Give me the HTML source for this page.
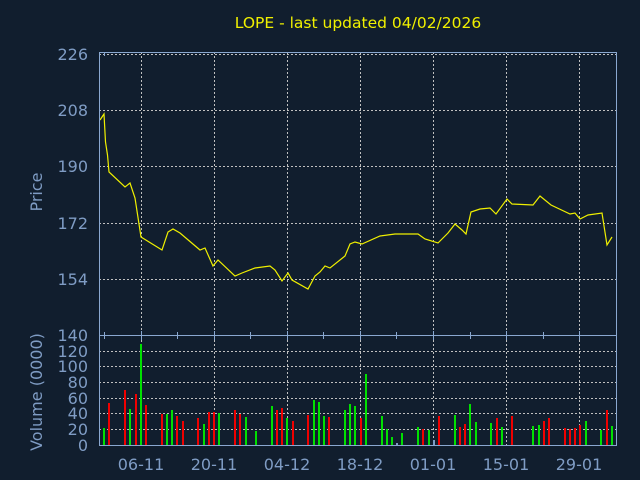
<!DOCTYPE html>
<html><head><style>
body{margin:0;background:#111e2e;}
svg{display:block;font-family:"DejaVu Sans","Liberation Sans",sans-serif;}
</style></head><body>
<svg width="640" height="480" xmlns="http://www.w3.org/2000/svg">
<rect width="640" height="480" fill="#111e2e"/>
<text x="358" y="28" fill="#f0f000" font-size="15.5" text-anchor="middle">LOPE - last updated 04/02/2026</text>
<g stroke="#c0c0c0" stroke-dasharray="2,2" stroke-width="1">
<line x1="99" y1="54.5" x2="617" y2="54.5"/>
<line x1="99" y1="110.5" x2="617" y2="110.5"/>
<line x1="99" y1="166.5" x2="617" y2="166.5"/>
<line x1="99" y1="223.5" x2="617" y2="223.5"/>
<line x1="99" y1="279.5" x2="617" y2="279.5"/>
<line x1="99" y1="351.5" x2="617" y2="351.5"/>
<line x1="99" y1="366.5" x2="617" y2="366.5"/>
<line x1="99" y1="382.5" x2="617" y2="382.5"/>
<line x1="99" y1="398.5" x2="617" y2="398.5"/>
<line x1="99" y1="413.5" x2="617" y2="413.5"/>
<line x1="99" y1="429.5" x2="617" y2="429.5"/>
<line x1="141.5" y1="52" x2="141.5" y2="445"/>
<line x1="214.5" y1="52" x2="214.5" y2="445"/>
<line x1="287.5" y1="52" x2="287.5" y2="445"/>
<line x1="360.5" y1="52" x2="360.5" y2="445"/>
<line x1="433.5" y1="52" x2="433.5" y2="445"/>
<line x1="506.5" y1="52" x2="506.5" y2="445"/>
<line x1="579.5" y1="52" x2="579.5" y2="445"/>
</g>
<g stroke-width="2">
<g stroke="#00e000">
<line x1="104" y1="445" x2="104" y2="428"/><line x1="130" y1="445" x2="130" y2="409"/><line x1="141" y1="445" x2="141" y2="344"/>
<line x1="167" y1="445" x2="167" y2="414"/><line x1="172" y1="445" x2="172" y2="410"/><line x1="204" y1="445" x2="204" y2="424"/>
<line x1="219" y1="445" x2="219" y2="413"/><line x1="246" y1="445" x2="246" y2="417"/><line x1="256" y1="445" x2="256" y2="431"/>
<line x1="272" y1="445" x2="272" y2="406"/><line x1="287" y1="445" x2="287" y2="418"/><line x1="314" y1="445" x2="314" y2="400"/>
<line x1="319" y1="445" x2="319" y2="402"/><line x1="324" y1="445" x2="324" y2="416"/><line x1="345" y1="445" x2="345" y2="410"/>
<line x1="350" y1="445" x2="350" y2="404"/><line x1="355" y1="445" x2="355" y2="406"/><line x1="366" y1="445" x2="366" y2="374"/>
<line x1="382" y1="445" x2="382" y2="416"/><line x1="387" y1="445" x2="387" y2="429"/><line x1="392" y1="445" x2="392" y2="437"/>
<line x1="402" y1="445" x2="402" y2="433"/><line x1="418" y1="445" x2="418" y2="427"/><line x1="429" y1="445" x2="429" y2="430"/>
<line x1="455" y1="445" x2="455" y2="415"/><line x1="470" y1="445" x2="470" y2="404"/><line x1="476" y1="445" x2="476" y2="422"/>
<line x1="491" y1="445" x2="491" y2="423"/><line x1="502" y1="445" x2="502" y2="427"/><line x1="533" y1="445" x2="533" y2="426"/>
<line x1="539" y1="445" x2="539" y2="425"/><line x1="586" y1="445" x2="586" y2="421"/><line x1="601" y1="445" x2="601" y2="430"/>
<line x1="612" y1="445" x2="612" y2="426"/>
</g>
<g stroke="#f00000">
<line x1="109" y1="445" x2="109" y2="403"/><line x1="125" y1="445" x2="125" y2="390"/><line x1="136" y1="445" x2="136" y2="394"/>
<line x1="146" y1="445" x2="146" y2="405"/><line x1="162" y1="445" x2="162" y2="414"/><line x1="177" y1="445" x2="177" y2="416"/>
<line x1="183" y1="445" x2="183" y2="421"/><line x1="198" y1="445" x2="198" y2="418"/><line x1="209" y1="445" x2="209" y2="412"/>
<line x1="214" y1="445" x2="214" y2="412"/><line x1="235" y1="445" x2="235" y2="410"/><line x1="240" y1="445" x2="240" y2="414"/>
<line x1="277" y1="445" x2="277" y2="410"/><line x1="282" y1="445" x2="282" y2="408"/><line x1="293" y1="445" x2="293" y2="421"/>
<line x1="308" y1="445" x2="308" y2="415"/><line x1="329" y1="445" x2="329" y2="417"/><line x1="361" y1="445" x2="361" y2="418"/>
<line x1="423" y1="445" x2="423" y2="429"/><line x1="439" y1="445" x2="439" y2="416"/><line x1="460" y1="445" x2="460" y2="427"/>
<line x1="465" y1="445" x2="465" y2="424"/><line x1="497" y1="445" x2="497" y2="418"/><line x1="512" y1="445" x2="512" y2="416"/>
<line x1="544" y1="445" x2="544" y2="421"/><line x1="549" y1="445" x2="549" y2="418"/><line x1="565" y1="445" x2="565" y2="428"/>
<line x1="570" y1="445" x2="570" y2="429"/><line x1="575" y1="445" x2="575" y2="428"/><line x1="580" y1="445" x2="580" y2="425"/>
<line x1="607" y1="445" x2="607" y2="410"/>
</g>
<g stroke="#7f9cc4"><line x1="397" y1="445" x2="397" y2="443"/><line x1="434" y1="445" x2="434" y2="440"/></g>
</g>
<polyline fill="none" stroke="#f0f000" stroke-width="1.2" points="100,120 104,114 105.5,142 107.5,155 109,172 125,187 130,183 135,198 141,237 162,250 168,232 173,229 180,233 200,250 205,248 213,266 218,260 235,276 242,273 255,268 270,266 275,270 282,281 288,273 292,280 308,289 315,276 320,272 325,266 330,268 345,256 350,244 355,242 362,244 380,236 395,234 418,234 425,239 438,243 448,233 455,224 462,230 466,234 471,212 480,209 490,208 496,214 507,199 512,204 533,205 540,196 551,205 570,214 575,213 580,219 588,215 602,213 607,245 612,237"/>
<g stroke="#8aa8d0" stroke-width="1" fill="none">
<path d="M99.5 52.5 H616.5 V445.5 H99.5 Z"/>
<line x1="99" y1="335.5" x2="617" y2="335.5"/>
<line x1="104.5" y1="52" x2="104.5" y2="56"/>
<line x1="104.5" y1="332" x2="104.5" y2="339"/><line x1="177.5" y1="332" x2="177.5" y2="339"/><line x1="250.5" y1="332" x2="250.5" y2="339"/>
<line x1="323.5" y1="332" x2="323.5" y2="339"/><line x1="396.5" y1="332" x2="396.5" y2="339"/><line x1="470.5" y1="332" x2="470.5" y2="339"/><line x1="543.5" y1="332" x2="543.5" y2="339"/>
<line x1="141.5" y1="331" x2="141.5" y2="340"/><line x1="214.5" y1="331" x2="214.5" y2="340"/><line x1="287.5" y1="331" x2="287.5" y2="340"/><line x1="360.5" y1="331" x2="360.5" y2="340"/><line x1="433.5" y1="331" x2="433.5" y2="340"/><line x1="506.5" y1="331" x2="506.5" y2="340"/><line x1="579.5" y1="331" x2="579.5" y2="340"/>
</g>
<g fill="#7f9cc4" font-size="16" text-anchor="end">
<text x="88" y="60">226</text><text x="88" y="116">208</text><text x="88" y="172">190</text><text x="88" y="229">172</text><text x="88" y="285">154</text><text x="88" y="341">140</text>
<text x="88" y="357">120</text><text x="88" y="372">100</text><text x="88" y="388">80</text><text x="88" y="404">60</text><text x="88" y="419">40</text><text x="88" y="435">20</text><text x="88" y="451">0</text>
</g>
<g fill="#7f9cc4" font-size="16" text-anchor="middle">
<text x="141" y="470">06-11</text><text x="214" y="470">20-11</text><text x="287" y="470">04-12</text><text x="360" y="470">18-12</text><text x="433" y="470">01-01</text><text x="506" y="470">15-01</text><text x="579" y="470">29-01</text>
<text transform="translate(42,192) rotate(-90)">Price</text>
<text transform="translate(42,392) rotate(-90)">Volume (0000)</text>
</g>
</svg>
</body></html>
